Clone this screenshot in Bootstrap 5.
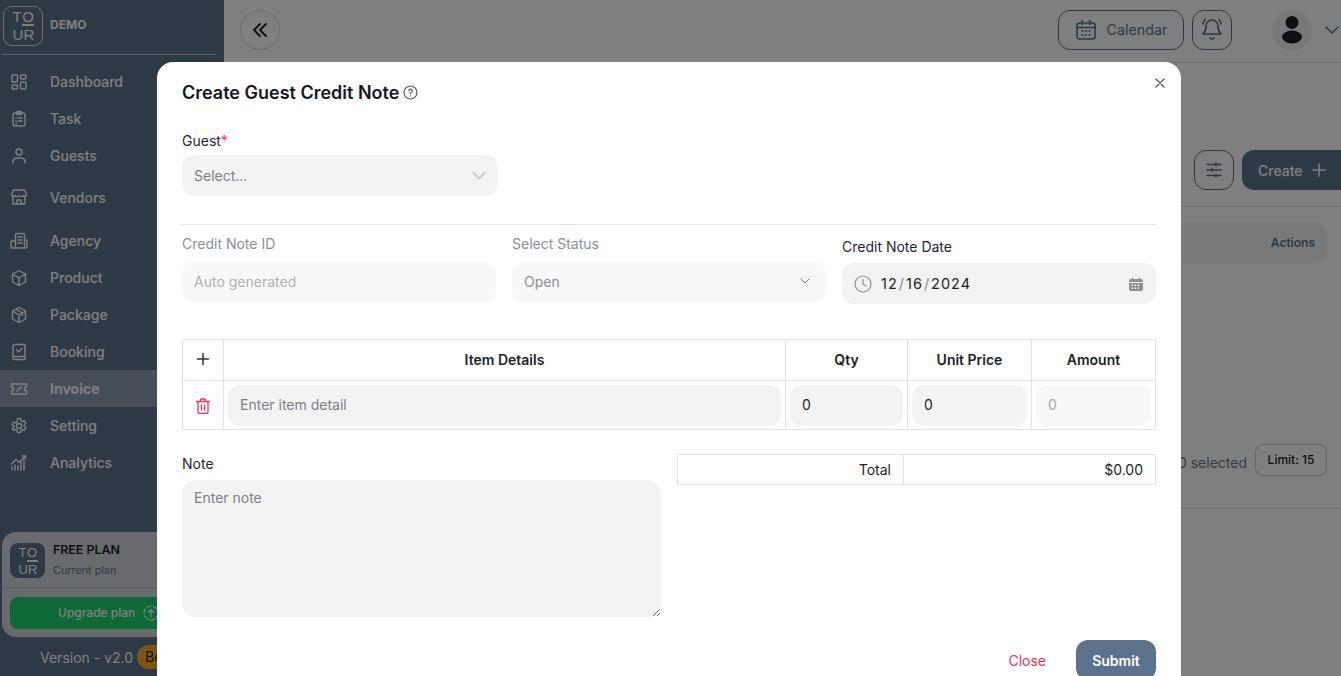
<!DOCTYPE html>
<html lang="en">
<head>
<meta charset="utf-8">
<title>Create Guest Credit Note</title>
<link href="https://cdn.jsdelivr.net/npm/bootstrap@5.3.0/dist/css/bootstrap.min.css" rel="stylesheet">
<style>
html,body{height:676px;overflow:hidden}
body{font-family:Inter,"Liberation Sans",sans-serif;font-size:14px;color:#1a1f26;background:#fff}
svg{display:block;flex:none}
.shell{height:676px}
.side{width:224px;flex:none;background:#5a748c;position:relative}
.side-top{height:55px;margin:0 8px 0 2px;border-bottom:1px solid #c9c9c9;padding:0 0 3px 1px}
.tile{width:40px;height:40px;border:1px solid #e0e0e0;border-radius:9px;display:flex;flex-direction:column;align-items:center;justify-content:center;color:#fff;font-family:"Liberation Sans",sans-serif;font-size:15px;line-height:17px;flex:none;padding-left:1px}
.tile-top{letter-spacing:.5px}
.tile-o{display:inline-block;border-bottom:2px solid currentColor;line-height:15px}
.tile-low{letter-spacing:.2px}
.demo{font-size:12px;font-weight:700;color:#fff;margin-left:7px;margin-top:-1px}
.menu{padding-top:8px}
.menu-row{height:37px;display:flex;align-items:center;padding-left:10px;color:#fff;font-weight:500;font-size:14px;gap:22px;text-decoration:none}
.menu-row svg{width:18px;height:18px;stroke:#fff;fill:none;stroke-width:1.4;stroke-linecap:round;stroke-linejoin:round}
.menu-row.tall{height:42px;margin-top:2px}
.menu-row.tall2{margin-top:4px}
.menu-row.on{background:#8a9bad;font-weight:700}
.plan{position:absolute;left:2px;top:532px;width:222px;height:105px;background:#d0d5da;border-radius:14px}
.plan-head{height:56px;border-bottom:1px solid #b6bcc2;padding:11px 0 0 8px;gap:8px;display:flex}
.plan-tile{width:35px;height:35px;background:#5a748c;border-radius:8px;border:0;font-size:13px;line-height:15px}
.plan-name{font-size:12.4px;font-weight:600;line-height:14px;color:#1a1f26}
.plan-sub{font-size:10.8px;line-height:13px;margin-top:7px;color:#5a748c}
.upgrade{margin:9px 0 0 8px;height:32px;width:208px;background:#1ad36c;border-radius:8px;color:#fff;font-size:12px;font-weight:500;display:flex;align-items:center;padding-left:48px;gap:8px}
.version{position:absolute;left:40px;top:645px;display:flex;align-items:center;gap:4px;color:#fff;font-size:14px;font-weight:400;white-space:nowrap}
.beta{background:#ffa91f;color:#1a1f26;border-radius:12px;padding:0 8px;height:24px;line-height:24px}
.main-col{flex:1;min-width:0;background:#fff;position:relative}
.topbar{height:63px;border-bottom:1px solid #e6e6e6;padding:10px 0 0 16px}
.round-btn{width:40px;height:40px;border:1px solid #d9dde1;border-radius:50%;display:flex;align-items:center;justify-content:center}
.out-btn{height:40px;border:1px solid #5a748c;border-radius:12px;display:flex;align-items:center;justify-content:center;color:#5a748c;background:#fff}
.cal-btn{width:126px;gap:10px;font-size:14.3px;margin-right:8px}
.bell-btn{width:40px}
.avatar{width:40px;height:40px;border-radius:50%;background:#f0f0f0;margin-left:40px;display:flex;align-items:center;justify-content:center}
.caret{margin:16px 2px 0 13px}
.tools{height:144px;border-bottom:1px solid #e6e6e6;padding-top:87px;gap:8px}
.create-btn{width:99px;height:40px;background:#5a748c;color:#fff;border-radius:12px 0 0 12px;font-size:14px;display:flex;align-items:center;gap:9px;padding-left:16px;font-weight:500}
.thead-strip{height:40px;margin:16px 14px 0 0;background:#f2f2f2;border-radius:10px;font-size:12px;font-weight:600;color:#5a748c;text-align:right;line-height:40px;padding-right:12px}
.pager{height:246px;border-bottom:1px solid #e6e6e6;padding:181px 14px 0 0;gap:8px;color:#6b7785;font-size:14px}
.limit{width:72px;height:32px;border:1px solid #c8ccd1;border-radius:8px;color:#1a1f26;font-size:12px;line-height:30px;text-align:center;font-weight:500}
.veil{position:fixed;inset:0;background:rgba(0,0,0,.5);z-index:10}
.sheet{position:fixed;left:157px;top:62px;width:1024px;height:700px;background:#fff;border-radius:16px;z-index:11;padding:17px 25px 0 25px}
.sheet-title{font-size:18px;font-weight:600;line-height:27px;color:#14181d;gap:4px;margin:0 0 25px}
.x-btn{position:absolute;right:15px;top:15px;width:12px;height:12px;padding:0;border:0;background:none}
.lbl{font-size:14px;line-height:20px;color:#1f2630;margin-bottom:4px;display:block}
.lbl.dim{color:#8b8f95;margin-bottom:8px}
.req{color:#f5305f}
.fld{height:40px;background:#f3f3f3;border:0;border-radius:12px;font-size:14px;color:#1a1f26;padding:0 12px 2px;box-shadow:none}
.fld::placeholder{color:#7b7f85;opacity:1}
.fld:disabled{background:#f8f8f8;color:#a8a8a8}
.fld:disabled::placeholder{color:#b0b0b0}
.guest{width:316px;height:41px;color:#7b7f85;padding-bottom:0}
.status{background:#f8f8f8;color:#8b8f95}
.sep{height:1px;background:#e2e2ec;margin:28px 0 9px}
.date-fld{height:41px;padding:0 12px;letter-spacing:1px;font-size:14.5px;gap:9px}
.date-lbl{margin-top:3px;margin-bottom:6px}
.sl{color:#8a8a8a;padding:0 1px}
.grid-tbl{table-layout:fixed;width:973px;margin:35px 0 0;border-collapse:collapse}
.grid-tbl th,.grid-tbl td{border:1px solid #e3e3e3;padding:4px;vertical-align:middle;text-align:center}
.grid-tbl th{height:41px;font-size:14px;font-weight:600;color:#1a1f26;padding-bottom:6px}
.grid-tbl td{height:48px;padding-bottom:3px}
.grid-tbl .fld{width:100%;height:41px;text-align:left}
.total-tbl{table-layout:fixed;width:100%;border-collapse:collapse}
.total-tbl td{border:1px solid #e3e3e3;height:30px;padding:0 12px;text-align:right;font-size:14px;color:#1a1f26}
.note-row{margin-top:24px}
.note-lbl{margin-bottom:6px}
.note-box{height:137px;width:100%;padding-top:7px;resize:vertical;border-radius:14px}
.foot{margin-top:23px;gap:30px}
.close-link{color:#f5305f;font-size:14px;text-decoration:none}
.submit-btn{width:80px;height:40px;background:#5a728c;border:0;border-radius:12px;color:#fff;font-size:14px;font-weight:600;padding:0}
</style>
</head>
<body>
<div class="shell d-flex">
  <aside class="side">
    <div class="side-top d-flex align-items-center">
      <div class="tile"><span class="tile-top">T<span class="tile-o">O</span></span><span class="tile-low">UR</span></div>
      <span class="demo">DEMO</span>
    </div>
    <nav class="menu">
      <a class="menu-row" href="#"><svg viewBox="0 0 18 18"><rect x="2" y="2" width="5.5" height="7" rx="1"/><rect x="10.5" y="2" width="5.5" height="4" rx="1"/><rect x="2" y="12" width="5.5" height="4" rx="1"/><rect x="10.5" y="9" width="5.5" height="7" rx="1"/></svg>Dashboard</a>
      <a class="menu-row" href="#"><svg viewBox="0 0 18 18"><rect x="3" y="3" width="12" height="13" rx="2"/><rect x="6.5" y="1.5" width="5" height="3" rx="1"/><path d="M6 8h.5M8.500 8H12M6 11h.5M8.500 11H12M6 13.500h.5"/></svg>Task</a>
      <a class="menu-row" href="#"><svg viewBox="0 0 18 18"><circle cx="9" cy="5" r="3"/><path d="M3 16v-2a4 4 0 0 1 4-3h4a4 4 0 0 1 4 3v2"/></svg>Guests</a>
      <a class="menu-row tall" href="#"><svg viewBox="0 0 18 18"><path d="M3 8v8h12V8M1.500 6.500 3.500 2h11l2 4.500a2 2 0 0 1-3.700 1 2.200 2.200 0 0 1-3.800 0 2.200 2.200 0 0 1-3.800 0 2 2 0 0 1-3.700-1zM7 16v-4h4v4"/></svg>Vendors</a>
      <a class="menu-row tall2" href="#"><svg viewBox="0 0 18 18"><path d="M5.500 16V3a1.500 1.500 0 0 1 1.500-1.500h6A1.500 1.500 0 0 1 14.500 3v13M14.500 8h1.500a1 1 0 0 1 1 1v6a1 1 0 0 1-1 1H2a1 1 0 0 1-1-1v-5a1 1 0 0 1 1-1h3.500M8 5h4M8 8h4M8 11h4"/></svg>Agency</a>
      <a class="menu-row" href="#"><svg viewBox="0 0 18 18"><path d="M9 1.500 15.500 5v8L9 16.500 2.500 13V5zM2.500 5 9 9l6.500-4M9 9v7.500"/></svg>Product</a>
      <a class="menu-row" href="#"><svg viewBox="0 0 18 18"><path d="M9 1.500 15.500 5v8L9 16.500 2.500 13V5zM2.500 5 9 9l6.500-4M9 9v7.500M5.700 3.200 12.300 7v2.500"/></svg>Package</a>
      <a class="menu-row" href="#"><svg viewBox="0 0 18 18"><path d="M3 14V3a1.500 1.500 0 0 1 1.500-1.500H15V16.500H4.500A1.500 1.500 0 0 1 3 15zM3 13.500h12M6.500 7l2 2 3.500-3.500"/></svg>Booking</a>
      <a class="menu-row on" href="#"><svg viewBox="0 0 18 18"><path d="M1.500 4H16.500V7a2 2 0 0 0 0 4v3H1.500V11a2 2 0 0 0 0-4zM7 11l4-4"/></svg>Invoice</a>
      <a class="menu-row" href="#"><svg viewBox="0 0 18 18"><circle cx="9" cy="9" r="2.500"/><path d="M7.500 1.500h3l.4 2.200 1.500.8 2-.8 1.500 2.600-1.700 1.400v1.600l1.700 1.400-1.500 2.600-2-.8-1.500.8-.4 2.200h-3l-.4-2.200-1.500-.8-2 .8L2.100 12l1.700-1.400V9L2.100 7.600l1.500-2.600 2 .8 1.500-.8z"/></svg>Setting</a>
      <a class="menu-row" href="#"><svg viewBox="0 0 18 18"><path d="M2 16v-3M5 16v-5M8 16v-4M11 16V8M14 16V6M1.500 10 6 5.500l3 3L15.500 2M12.500 2h3v3"/></svg>Analytics</a>
    </nav>
    <div class="plan">
      <div class="plan-head">
        <div class="tile plan-tile"><span class="tile-top">T<span class="tile-o">O</span></span><span class="tile-low">UR</span></div>
        <div><div class="plan-name">FREE PLAN</div><div class="plan-sub">Current plan</div></div>
      </div>
      <div class="upgrade">Upgrade plan
        <svg width="16" height="16" viewBox="0 0 16 16" fill="none" stroke="#fff" stroke-width="1.200" stroke-linecap="round" stroke-linejoin="round"><circle cx="8" cy="8" r="7" stroke-dasharray="5 2"/><path d="M8 12V5M5 7.500 8 4.500l3 3"/></svg>
      </div>
    </div>
    <div class="version">Version - v2.0 <span class="beta">Beta</span></div>
  </aside>
  <main class="main-col">
    <div class="topbar d-flex">
      <div class="round-btn"><svg width="16" height="16" viewBox="0 0 16 16" fill="none" stroke="#1a1f26" stroke-width="1.800" stroke-linecap="round" stroke-linejoin="round"><path d="M8 2 2 8l6 6M14 2 8 8l6 6"/></svg></div>
      <div class="ms-auto d-flex">
        <div class="out-btn cal-btn"><svg width="22" height="22" viewBox="0 0 22 22" fill="none" stroke="#5a748c" stroke-width="1.600" stroke-linecap="round"><rect x="2" y="4" width="18" height="16" rx="2.500"/><path d="M2 8.500h18M7 1.500v4M15 1.500v4M7 12h1M10.500 12h1M14 12h1M7 16h1M10.500 16h1M14 16h1"/></svg>Calendar</div>
        <div class="out-btn bell-btn"><svg width="24" height="26" viewBox="0 0 24 26" fill="none" stroke="#5a748c" stroke-width="1.700" stroke-linecap="round" stroke-linejoin="round"><path d="M12 3a6 6 0 0 0-6 6c0 5-2 7-3 8h18c-1-1-3-3-3-8a6 6 0 0 0-6-6zM10 21c1 1.300 3 1.300 4 0M3 7c0-2 1-3.500 2-4.500M21 7c0-2-1-3.500-2-4.500"/></svg></div>
        <div class="avatar"><svg width="22" height="30" viewBox="0 0 22 30" fill="#1a1f26"><circle cx="11" cy="7.500" r="6.500"/><ellipse cx="11" cy="22" rx="10" ry="6.500"/></svg></div>
        <svg class="caret" width="14" height="9" viewBox="0 0 14 9" fill="none" stroke="#5a748c" stroke-width="1.500" stroke-linecap="round" stroke-linejoin="round"><path d="m1 1 6 6 6-6"/></svg>
      </div>
    </div>
    <div class="tools d-flex justify-content-end">
      <div class="out-btn bell-btn"><svg width="18" height="18" viewBox="0 0 18 18" fill="none" stroke="#5a748c" stroke-width="1.500" stroke-linecap="round"><path d="M2 3.500h14M2 9h14M2 14.500h14M11 2v3M7 7.500v3M11 13v3"/></svg></div>
      <div class="create-btn">Create<svg width="14" height="14" viewBox="0 0 14 14" fill="none" stroke="#fff" stroke-width="1.500" stroke-linecap="round"><path d="M7 1v12M1 7h12"/></svg></div>
    </div>
    <div class="thead-strip">Actions</div>
    <div class="pager d-flex justify-content-end"><span class="pt-1 mt-1">0 selected</span><span class="limit">Limit: 15</span></div>
  </main>
</div>

<div class="veil"></div>
<section class="sheet">
  <button class="x-btn" type="button" aria-label="Close"><svg width="12" height="12" viewBox="0 0 12 12" fill="none" stroke="#555" stroke-width="1.300" stroke-linecap="round"><path d="m2 2 8 8M10 2l-8 8"/></svg></button>
  <h5 class="sheet-title d-flex align-items-center">Create Guest Credit Note
    <svg width="15" height="15" viewBox="0 0 15 15" fill="none" stroke="#555" stroke-width="1.100" stroke-linecap="round"><circle cx="7.500" cy="7.500" r="6.500"/><path d="M5.800 6a1.800 1.800 0 1 1 2.500 1.600c-.6.300-.8.600-.8 1.200M7.500 10.800v.2"/></svg>
  </h5>
  <label class="lbl">Guest<span class="req">*</span></label>
  <div class="fld guest d-flex align-items-center justify-content-between">Select...
    <svg width="14" height="8" viewBox="0 0 14 8" fill="none" stroke="#cccccc" stroke-width="2" stroke-linecap="round" stroke-linejoin="round"><path d="m1.500 1 5.500 5.500L12.500 1"/></svg>
  </div>
  <div class="sep"></div>
  <div class="row gx-3">
    <div class="col-4">
      <label class="lbl dim">Credit Note ID</label>
      <input class="form-control fld" placeholder="Auto generated" disabled>
    </div>
    <div class="col-4">
      <label class="lbl dim">Select Status</label>
      <div class="fld status d-flex align-items-center justify-content-between">Open
        <svg class="me-1" width="10" height="6" viewBox="0 0 10 6" fill="none" stroke="#777" stroke-width="1" stroke-linecap="round" stroke-linejoin="round"><path d="m1 1 4 4 4-4"/></svg>
      </div>
    </div>
    <div class="col-4">
      <label class="lbl date-lbl">Credit Note Date</label>
      <div class="fld date-fld d-flex align-items-center">
        <svg width="18" height="18" viewBox="0 0 18 18" fill="none" stroke="#8f8f8f" stroke-width="1.200" stroke-linecap="round" stroke-linejoin="round"><circle cx="9" cy="9" r="8"/><path d="M9 4.500V9l3 2"/></svg>
        <span>12<span class="sl">/</span>16<span class="sl">/</span>2024</span>
        <svg class="ms-auto" width="16" height="16" viewBox="0 0 16 16"><path fill="#8f8f8f" d="M1 5a2 2 0 0 1 2-2h1V1.500h1V3h6V1.500h1V3h1a2 2 0 0 1 2 2v1H1zM1 7h14v6a2 2 0 0 1-2 2H3a2 2 0 0 1-2-2z"/><path stroke="#f2f2f2" stroke-width="1.400" stroke-dasharray="1.500 1.500" d="M3.500 9.200h9M3.500 12.200h9"/></svg>
      </div>
    </div>
  </div>
  <table class="grid-tbl">
    <colgroup><col style="width:41px"><col style="width:562px"><col style="width:122px"><col style="width:124px"><col style="width:124px"></colgroup>
    <thead>
      <tr>
        <th><svg class="mx-auto" width="14" height="14" viewBox="0 0 14 14" fill="none" stroke="#2a2f36" stroke-width="1.500" stroke-linecap="round"><path d="M7 1.500v11M1.500 7h11"/></svg></th>
        <th>Item Details</th><th>Qty</th><th>Unit Price</th><th>Amount</th>
      </tr>
    </thead>
    <tbody>
      <tr>
        <td><svg class="mx-auto" width="16" height="16" viewBox="0 0 16 16" fill="none" stroke="#f5305f" stroke-width="1.300" stroke-linecap="round" stroke-linejoin="round"><path d="M1.500 3.500h13M5.500 3.500V2a1 1 0 0 1 1-1h3a1 1 0 0 1 1 1v1.500M3 3.500V14a1.300 1.300 0 0 0 1.300 1.300h7.400A1.300 1.300 0 0 0 13 14V3.500M6.500 7v5M9.500 7v5"/></svg></td>
        <td><input class="form-control fld" placeholder="Enter item detail"></td>
        <td><input class="form-control fld" value="0"></td>
        <td><input class="form-control fld" value="0"></td>
        <td><input class="form-control fld" value="0" disabled></td>
      </tr>
    </tbody>
  </table>
  <div class="row gx-3 note-row">
    <div class="col-6">
      <label class="lbl note-lbl">Note</label>
      <textarea class="form-control fld note-box" placeholder="Enter note"></textarea>
    </div>
    <div class="col-6">
      <table class="total-tbl"><colgroup><col style="width:226px"><col></colgroup><tr><td>Total</td><td>$0.00</td></tr></table>
    </div>
  </div>
  <div class="foot d-flex justify-content-end align-items-center">
    <a class="close-link" href="#">Close</a>
    <button class="submit-btn" type="button">Submit</button>
  </div>
</section>
<script src="https://cdn.jsdelivr.net/npm/bootstrap@5.3.0/dist/js/bootstrap.bundle.min.js"></script>
</body>
</html>
